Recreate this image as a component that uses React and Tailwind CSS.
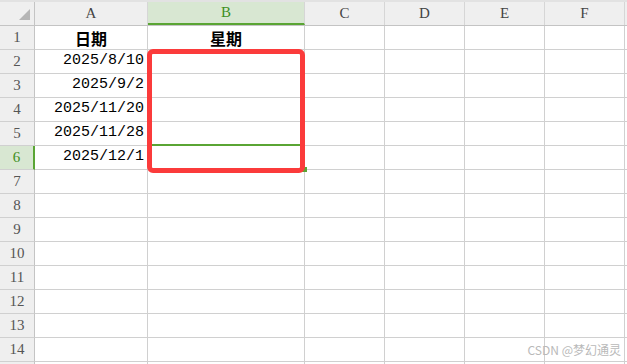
import React from "react";

const COLS = [
  { key: "A", w: "w-[113px]" },
  { key: "B", w: "w-[157px]" },
  { key: "C", w: "w-[80px]" },
  { key: "D", w: "w-[80px]" },
  { key: "E", w: "w-[80px]" },
  { key: "F", w: "w-[80px]" },
];

const DATA = {
  1: { A: "日期", B: "星期", head: true },
  2: { A: "2025/8/10" },
  3: { A: "2025/9/2" },
  4: { A: "2025/11/20" },
  5: { A: "2025/11/28" },
  6: { A: "2025/12/1" },
};

const ROWS = Array.from({ length: 15 }, (_, i) => i + 1);

const serif = "font-['Liberation_Serif','Noto_Sans_CJK_SC',serif]";
const cjk = "font-['Noto_Sans_CJK_SC',sans-serif]";
const mono = "font-['Liberation_Mono',monospace]";

function ColHeader({ col }) {
  const active = col.key === "B";
  return (
    <div
      className={`${col.w} h-full shrink-0 flex items-center justify-center border-r border-[#d6d6d6] text-[15px] ${serif} ${
        active
          ? "bg-[#d8e7d2] text-[#3f8f22] border-b-2 border-b-[#5aa534]"
          : "bg-[#efefef] text-[#444]"
      }`}
    >
      {col.key}
    </div>
  );
}

function Row({ n }) {
  const row = DATA[n] || {};
  const active = n === 6;
  // the last row is only a sliver at the bottom edge, its number is out of view
  const label = n < 15 ? n : "";
  return (
    <div className="flex h-[24px]">
      <div
        className={`w-[35px] shrink-0 flex items-center justify-center border-b border-[#d0d0d0] text-[15px] ${serif} ${
          active
            ? "bg-[#d8e7d2] text-[#3f8f22] border-r-2 border-r-[#5aa534]"
            : "bg-[#efefef] text-[#555] border-r border-r-[#c4c4c4]"
        }`}
      >
        {label}
      </div>
      {COLS.map((c) => {
        const v = row[c.key];
        return (
          <div
            key={c.key}
            className={`${c.w} shrink-0 flex items-center border-r border-b border-[#d0d0d0] text-black ${
              row.head ? `justify-center font-bold text-[16px] ${cjk}` : `justify-end pr-[3px] text-[15px] ${mono}`
            }`}
          >
            {v}
          </div>
        );
      })}
      <div className="flex-1 border-b border-[#d0d0d0]" />
    </div>
  );
}

export default function App() {
  return (
    <div className="relative w-[627px] h-[364px] overflow-hidden bg-white">
      <div className="h-[2px] bg-[#e2e2e2]" />
      <div className="flex h-[24px] border-b border-[#c4c4c4]">
        <div className="w-[35px] shrink-0 bg-[#efefef] border-r border-[#c4c4c4] relative">
          <div className="absolute left-[19px] top-[7px] w-0 h-0 border-l-[11px] border-l-transparent border-b-[11px] border-b-[#b5b5b5]" />
        </div>
        {COLS.map((c) => (
          <ColHeader key={c.key} col={c} />
        ))}
        <div className="flex-1 bg-[#efefef]" />
      </div>
      {ROWS.map((n) => (
        <Row key={n} n={n} />
      ))}

      {/* selected cell B6 */}
      <div className="absolute left-[147px] top-[144px] w-[157px] h-[2px] bg-[#5aa534]" />
      <div className="absolute left-[302px] top-[167px] w-[5px] h-[5px] bg-[#5aa534]" />

      {/* red annotation box */}
      <div className="absolute left-[147px] top-[49px] w-[158px] h-[124px] border-[5px] border-[#fb3b3b] rounded-[6px]" />

      <div className={`absolute right-[6px] bottom-[5px] text-[12px] text-[#b9b9b9] ${cjk}`}>
        CSDN @梦幻通灵
      </div>
    </div>
  );
}
